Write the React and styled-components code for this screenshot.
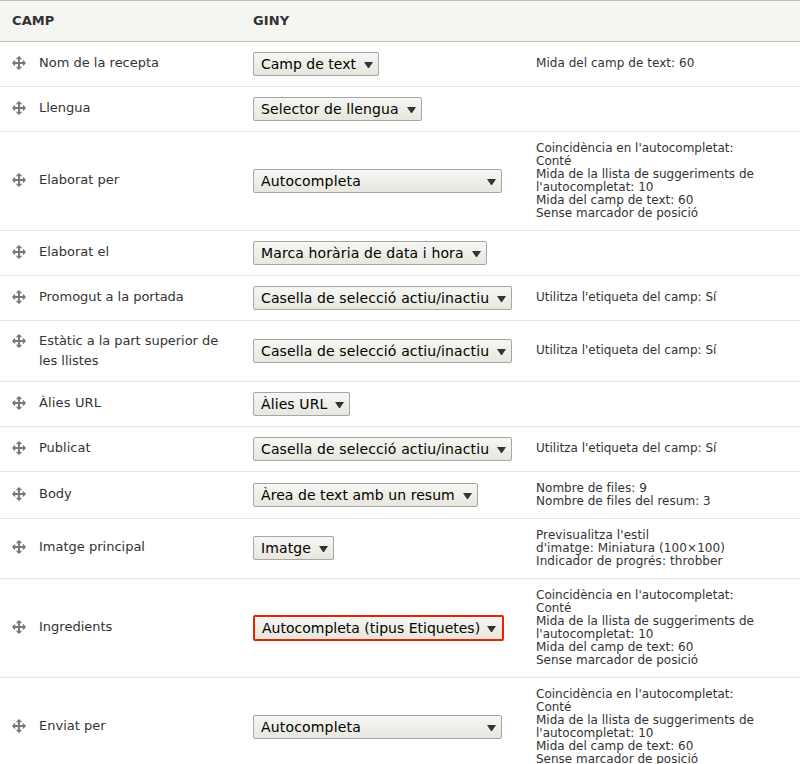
import React from "react";
import styled, { createGlobalStyle } from "styled-components";

const GlobalStyle = createGlobalStyle`
  body {
    margin: 0;
    background: #fff;
    color: #333;
    font-family: "DejaVu Sans", sans-serif;
    font-size: 13px;
    overflow: hidden;
  }
`;

const Table = styled.main`
  height: 764px;
  overflow: hidden;
`;

const columns = `
  display: grid;
  grid-template-columns: 241px 283px 1fr;
  align-items: center;
  box-sizing: border-box;
`;

const Header = styled.header`
  ${columns}
  height: 42px;
  padding: 0 0 2px 12px;
  border-top: 1px solid #bfbfba;
  border-bottom: 1px solid #bfbfba;
  background: #f5f5f2;
  font-weight: bold;
  letter-spacing: 0.1px;
  text-transform: uppercase;
`;

const Row = styled.section`
  ${columns}
  height: ${(p) => p.$height}px;
  padding-left: 12px;
  border-bottom: 1px solid #e6e4df;
`;

const Field = styled.div`
  display: flex;
  align-items: flex-start;
  gap: 13px;
  padding-right: 18px;
  padding-bottom: ${(p) => (p.$wrapped ? 1 : 3)}px;
  line-height: 20px;
  letter-spacing: ${(p) => p.$tracking || 0}px;
`;

const Handle = styled.svg`
  flex: none;
  width: 14px;
  height: 14px;
  margin-top: 3px;
`;

const Select = styled.button`
  display: flex;
  align-items: center;
  justify-content: space-between;
  box-sizing: border-box;
  width: ${(p) => p.$width}px;
  height: ${(p) => (p.$error ? 26 : 24)}px;
  margin: 0 0 0.5px;
  padding: 0 ${(p) => (p.$error ? 6 : 5)}px 0 7px;
  border: ${(p) => (p.$error ? "2px solid #e62600" : "1px solid #a6a6a6")};
  border-radius: 2px;
  background: linear-gradient(#f6f6f3, #e7e7df);
  color: #000;
  font: 14px/20px "DejaVu Sans", sans-serif;
  letter-spacing: ${(p) => p.$tracking || 0}px;
  white-space: nowrap;
`;

const Arrow = styled.svg`
  flex: none;
  width: 9px;
  height: 6px;
  margin-top: 2px;
`;

const Summary = styled.div`
  padding-bottom: 1px;
  font-size: 12px;
  line-height: 13px;
  letter-spacing: ${(p) => p.$tracking || 0}px;
  white-space: pre-line;
`;

const autocomplete = `Coincidència en l'autocompletat:
Conté
Mida de la llista de suggeriments de
l'autocompletat: 10
Mida del camp de text: 60
Sense marcador de posició`;
const checkbox = {
  widget: "Casella de selecció actiu/inactiu",
  width: 259,
  tracking: 0.12,
  summary: "Utilitza l'etiqueta del camp: Sí",
};

const rows = [
  { name: "Nom de la recepta", widget: "Camp de text", width: 126, height: 45, summary: "Mida del camp de text: 60", summaryTracking: 0.04 },
  { name: "Llengua", widget: "Selector de llengua", width: 169, tracking: 0.11, height: 45 },
  { name: "Elaborat per", widget: "Autocompleta", width: 249, tracking: 0.17, height: 99, summary: autocomplete },
  { name: "Elaborat el", widget: "Marca horària de data i hora", width: 234, tracking: 0.12, height: 45 },
  { ...checkbox, name: "Promogut a la portada", nameTracking: -0.04, height: 45 },
  { ...checkbox, name: "Estàtic a la part superior de les llistes", nameTracking: -0.05, wrapped: true, height: 61 },
  { name: "Àlies URL", nameTracking: 0.15, widget: "Àlies URL", width: 97, tracking: 0.1, height: 45 },
  { ...checkbox, name: "Publicat", height: 45 },
  { name: "Body", widget: "Àrea de text amb un resum", width: 225, tracking: 0.06, height: 47, summary: "Nombre de files: 9\nNombre de files del resum: 3", summaryTracking: 0.03 },
  { name: "Imatge principal", widget: "Imatge", width: 81, tracking: 0.1, height: 60, summary: "Previsualitza l'estil\nd'imatge: Miniatura (100×100)\nIndicador de progrés: throbber", summaryTracking: 0.09 },
  { name: "Ingredients", widget: "Autocompleta (tipus Etiquetes)", width: 251, height: 99, summary: autocomplete, error: true },
  { name: "Enviat per", widget: "Autocompleta", width: 249, tracking: 0.17, height: 99, summary: autocomplete },
];

const MoveIcon = () => (
  <Handle viewBox="0 0 14 14" aria-hidden="true">
    <path
      fill="#787878"
      d="M7 0 9.7 2.4V3.2H8V6h2.8V4.3h.8L14 7l-2.4 2.7h-.8V8H8v2.8h1.7v.8L7 14l-2.7-2.4v-.8H6V8H3.2v1.7h-.8L0 7l2.4-2.7h.8V6H6V3.2H4.3v-.8z"
    />
  </Handle>
);

export default function App() {
  return (
    <>
      <GlobalStyle />
      <Table>
        <Header>
          <span>Camp</span>
          <span>Giny</span>
        </Header>
        {rows.map((row) => (
          <Row key={row.name} $height={row.height}>
            <Field $wrapped={row.wrapped} $tracking={row.nameTracking}>
              <MoveIcon />
              <span>{row.name}</span>
            </Field>
            <Select type="button" $width={row.width} $error={row.error} $tracking={row.tracking}>
              <span>{row.widget}</span>
              <Arrow viewBox="0 0 9 6" aria-hidden="true">
                <path fill="#333" d="M0 0h9L5 6H4z" />
              </Arrow>
            </Select>
            <Summary $tracking={row.summaryTracking}>{row.summary}</Summary>
          </Row>
        ))}
      </Table>
    </>
  );
}
